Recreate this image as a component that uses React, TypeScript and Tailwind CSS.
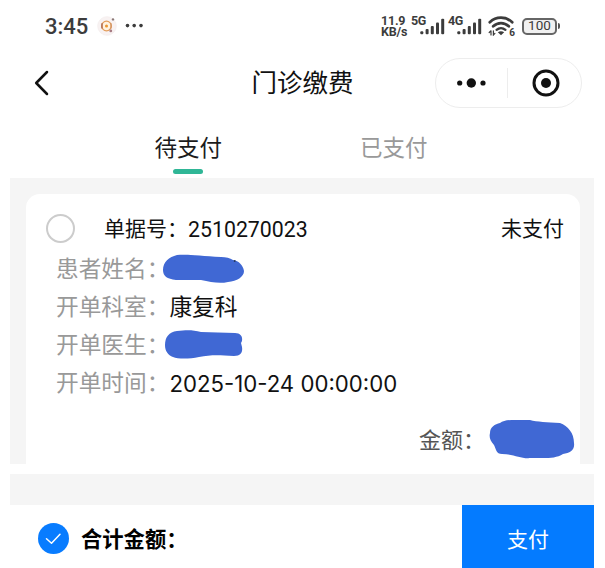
import React from 'react';

function SignalBars() {
  return (
    <svg width="25" height="17" viewBox="0 0 25 17" fill="#3c3c3c">
      <rect x="0.3" y="13.2" width="3" height="3" rx="1" />
      <rect x="5.6" y="11" width="3" height="5.2" rx="1" />
      <rect x="10.8" y="7.9" width="3" height="8.3" rx="1" />
      <rect x="16" y="4.6" width="3" height="11.6" rx="1" />
      <rect x="21.2" y="0.8" width="3" height="15.4" rx="1" />
    </svg>
  );
}

function Signal({ label }: { label: string }) {
  return (
    <div className="relative h-[19px] w-[34px]">
      <span className="absolute left-0 top-[-2px] text-[12.5px] leading-[12px] font-bold tracking-[-0.3px]">{label}</span>
      <div className="absolute bottom-[1px] left-[9px]">
        <SignalBars />
      </div>
    </div>
  );
}

function WifiIcon() {
  return (
    <div className="relative h-[20px] w-[26px]">
      <svg width="26" height="20" viewBox="0 0 26 20" fill="none" stroke="#3c3c3c" strokeLinecap="round">
        <path d="M1.8 6.2C8 0.2 18 0.2 24.2 6.2" strokeWidth="2.8" />
        <path d="M5.2 10.2C9.8 6 16.2 6 20.8 10.2" strokeWidth="2.8" />
        <path d="M8.6 13.8C11.2 11.6 14.8 11.6 17.4 13.8" strokeWidth="2.4" />
        <path d="M9.8 16.2L13 19.2L16.2 16.2Q13 14.2 9.8 16.2Z" fill="#3c3c3c" stroke="none" />
        <path d="M3 14.8V19M1.2 16.5L3 14.8M5.4 14.8V19L6.9 17.4" strokeWidth="1.2" />
      </svg>
      <span className="absolute right-[-1px] bottom-[-2px] text-[10px] leading-[11px] font-bold">6</span>
    </div>
  );
}

function StatusBar() {
  return (
    <div className="flex h-[52px] items-center pl-[45px] pr-[45px] font-['Roboto','Noto_Sans_CJK_SC',sans-serif] text-[#3c3c3c]">
      <span className="pt-px text-[22px] leading-none font-medium">3:45</span>
      <svg className="ml-[9px]" width="20" height="20" viewBox="0 0 20 20" fill="none">
        <circle cx="10" cy="10" r="9.3" fill="#f8f2f2" stroke="#f4eeee" strokeWidth="0.8" />
        <circle cx="9.5" cy="10" r="4.8" fill="#fff2df" stroke="#e39c59" strokeWidth="1.3" />
        <path d="M5 7.2V12.5" stroke="#a8654f" strokeWidth="1.3" />
        <path d="M14 7.2V12.5" stroke="#c98a5c" strokeWidth="1" />
        <circle cx="9.5" cy="10" r="1.5" fill="#ec962f" />
        <circle cx="16" cy="3.4" r="1.2" fill="#8b7775" />
        <circle cx="13.8" cy="14.9" r="1.4" fill="#a77b83" />
      </svg>
      <svg className="ml-[8px]" width="19" height="6" viewBox="0 0 19 6" fill="#3c3c3c">
        <circle cx="2.5" cy="2.6" r="1.8" />
        <circle cx="9.2" cy="2.6" r="1.8" />
        <circle cx="16" cy="2.6" r="1.8" />
      </svg>
      <div className="ml-auto flex items-center">
        <div className="w-[30px] text-[12.5px] leading-[11px] font-bold tracking-[-0.2px] whitespace-pre">{'11.9\nKB/s'}</div>
        <Signal label="5G" />
        <div className="w-[3px]" />
        <Signal label="4G" />
        <div className="ml-[6px]">
          <WifiIcon />
        </div>
        <div className="ml-[8px] flex h-[17px] w-[35px] items-center justify-center rounded-[5px] border-2 border-[#666] bg-[#f1f1f1] text-[13.5px] leading-none">
          100
        </div>
        <div className="ml-px h-[6px] w-[2px] rounded-r bg-[#555]" />
      </div>
    </div>
  );
}

function Header() {
  return (
    <div className="grid h-[61px] grid-cols-[1fr_auto_1fr] items-center">
      <svg className="ml-[33px]" width="18" height="28" viewBox="0 0 18 28" fill="none" stroke="#111" strokeWidth="2.5" strokeLinecap="round" strokeLinejoin="round">
        <path d="M14 3L3.2 14L14 25" />
      </svg>
      <h1 className="pt-[2px] text-[25.5px] leading-none text-[#111]">门诊缴费</h1>
      <div className="mr-[23px] flex h-[50px] w-[147px] items-center justify-self-end rounded-full border border-[#ededed]">
        <div className="flex flex-1 justify-center">
          <svg width="30" height="10" viewBox="0 0 30 10" fill="#111">
            <circle cx="3.7" cy="5" r="2.6" />
            <circle cx="15.3" cy="5" r="4.7" />
            <circle cx="27" cy="5" r="2.6" />
          </svg>
        </div>
        <div className="h-[30px] w-px bg-[#ededed]" />
        <div className="flex flex-1 justify-center pl-[3px]">
          <svg width="28" height="28" viewBox="0 0 28 28">
            <circle cx="14" cy="14" r="12" fill="none" stroke="#111" strokeWidth="3" />
            <circle cx="14" cy="14" r="5" fill="#111" />
          </svg>
        </div>
      </div>
    </div>
  );
}

function Tabs() {
  return (
    <div className="flex h-[65px] justify-center gap-[138px] pr-[23px] pt-[23px] text-[22.5px] leading-[24px]">
      <div className="flex flex-col items-center text-[#1c1c1c]">
        <span>待支付</span>
        <div className="mt-[9px] h-[5px] w-[30px] rounded-full bg-[#2fb696]" />
      </div>
      <div className="text-[#999]">已支付</div>
    </div>
  );
}

type Field = {
  label: string;
  value: React.ReactNode;
};

const fields: Field[] = [
  {
    label: '患者姓名',
    value: (
      <svg className="-ml-[7px] -mt-[2px]" width="84" height="32" viewBox="0 0 84 32">
        <path d="M1 17C1 9 7 4 15 2C25 1 39 3 59 4C64 4 68 5 71 7C77 8 81 12 82 18C82 24 75 28 66 29C57 31 49 29 39 27H14C5 26 1 23 1 17Z" fill="#4068d4" />
        <circle cx="72.7" cy="8" r="1" fill="#28395f" />
      </svg>
    ),
  },
  { label: '开单科室', value: '康复科' },
  {
    label: '开单医生',
    value: (
      <svg className="-ml-[5px] -mt-[2px]" width="80" height="30" viewBox="0 0 80 30">
        <path d="M1 15C1 7 5 2 13 1C23 0 29 0 37 2L71 3C76 3 79 6 78 11L77 13L78 17C79 23 76 26 70 26C53 25 46 25 35 27C25 29 14 29 9 27C4 25 1 21 1 15Z" fill="#4068d4" />
      </svg>
    ),
  },
  {
    label: '开单时间',
    value: <span className="font-['Inter',sans-serif] text-[22.2px]">2025-10-24 00:00:00</span>,
  },
];

function BillCard() {
  return (
    <div className="h-[279px] rounded-t-[14px] bg-white pt-[15px]">
      <div className="flex h-[38px] items-center pl-[20px] pr-[16px] text-[21px] leading-none text-[#111]">
        <div className="h-[29px] w-[29px] rounded-full border-[2.5px] border-[#ccc]" />
        <span className="ml-[29px] pt-[3px]">单据号：</span>
        <span className="pt-[3px] text-[21.3px]">2510270023</span>
        <span className="ml-auto pt-[3px]">未支付</span>
      </div>
      <div className="pt-[4px] pl-[30px] text-[22.7px] leading-none">
        {fields.map((field) => (
          <div key={field.label} className="flex h-[38.2px] items-center">
            <span className="text-[#999]">{field.label}：</span>
            <div className="text-[#111]">{field.value}</div>
          </div>
        ))}
      </div>
      <div className="mt-[13px] flex h-[44px] items-center justify-end pr-[4px] text-[22px] leading-none text-[#555]">
        <span className="pt-[5px]">金额：</span>
        <svg className="ml-[3px]" width="88" height="40" viewBox="0 0 88 40">
          <path d="M2 14C2 8 7 5 12 4C17 0 26 1 42 1C49 3 59 3 72 4C80 7 86 14 86 24C87 31 82 34 75 35C67 40 58 39 43 39C32 40 27 35 14 35C8 35 8 30 6 26C2 22 1 18 2 14Z" fill="#4068d4" />
        </svg>
      </div>
    </div>
  );
}

function Footer() {
  return (
    <div className="flex h-[63px] items-center pl-[38px] pr-[11px]">
      <svg className="mt-[4px]" width="31" height="31" viewBox="0 0 31 31" fill="none">
        <circle cx="15.5" cy="15.5" r="15.5" fill="#087cff" />
        <path d="M8.5 15.8L13.5 20.3L22 11.3" stroke="white" strokeWidth="1.5" strokeLinecap="round" strokeLinejoin="round" />
      </svg>
      <div className="ml-[12px] flex pt-[6px] text-[21.3px] leading-none font-bold text-black">
        <span>合计金额</span>
        <span>：</span>
      </div>
      <button className="ml-auto h-full w-[132px] bg-[#047bff] pt-[8px] text-[21px] leading-none text-white">支付</button>
    </div>
  );
}

export default function App() {
  return (
    <div className="h-[568px] w-[605px] overflow-hidden bg-white font-['Roboto','Noto_Sans_CJK_SC',sans-serif]">
      <StatusBar />
      <Header />
      <Tabs />
      <div className="mr-[11px] ml-[10px]">
        <div className="h-[286px] bg-[#f5f5f5] pt-[16px] pr-[14px] pl-[16px]">
          <BillCard />
        </div>
        <div className="mt-[10px] h-[31px] bg-[#f5f5f5]" />
      </div>
      <Footer />
    </div>
  );
}
